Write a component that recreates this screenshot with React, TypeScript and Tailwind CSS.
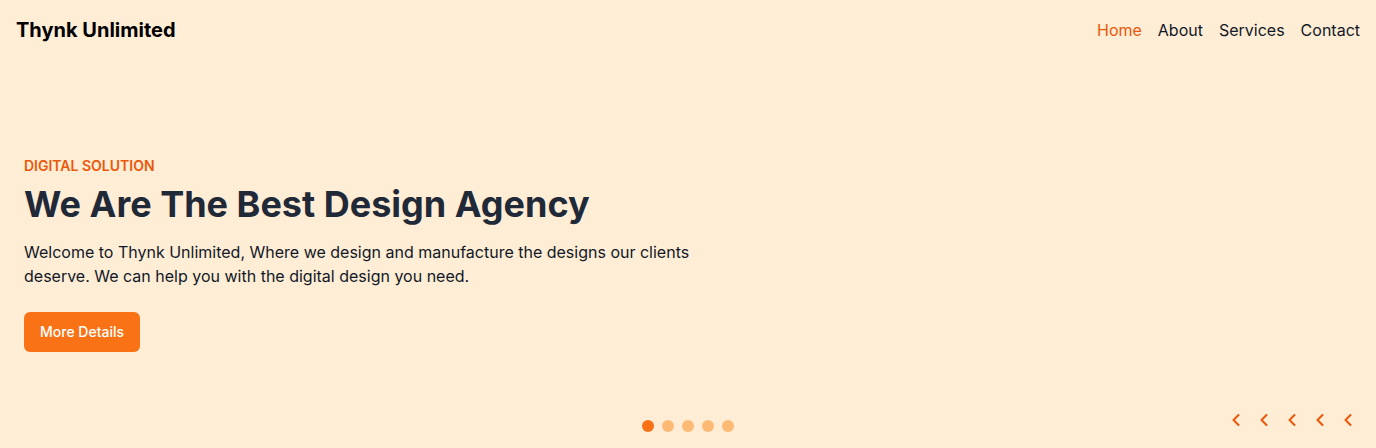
import React from "react";

const Chevron = () => (
  <svg width="20" height="20" viewBox="0 0 24 24" fill="none" stroke="currentColor" strokeWidth="2.5" strokeLinecap="round" strokeLinejoin="round">
    <path d="m15 18-6-6 6-6" />
  </svg>
);

export default function App() {
  return (
    <div className="w-[1376px] h-[448px] bg-[#ffedd5] overflow-hidden" style={{ fontFamily: "Inter, 'Noto Sans', sans-serif" }}>
      <header className="flex items-center justify-between px-4 h-[60px]">
        <div className="text-xl font-bold text-black">Thynk Unlimited</div>
        <nav className="flex items-center gap-4 text-base text-[#111827]">
          <a className="text-[#ea580c]">Home</a>
          <a>About</a>
          <a>Services</a>
          <a>Contact</a>
        </nav>
      </header>
      <section className="relative h-[388px] px-6 pt-24">
        <p className="text-sm font-semibold uppercase text-[#ea580c] mb-2">Digital Solution</p>
        <h1 className="text-4xl font-bold text-[#1f2937] leading-10">We Are The Best Design Agency</h1>
        <p className="mt-4 max-w-2xl text-base leading-6 text-[#111827]">
          Welcome to Thynk Unlimited, Where we design and manufacture the designs our clients deserve. We can help you with the digital design you need.
        </p>
        <button className="mt-6 h-10 px-4 rounded-md bg-[#f97316] text-white text-sm font-medium">More Details</button>
        <div className="absolute bottom-4 left-1/2 -translate-x-1/2 flex gap-2">
          <span className="w-3 h-3 rounded-full bg-[#f97316]" />
          <span className="w-3 h-3 rounded-full bg-[#fdba74]" />
          <span className="w-3 h-3 rounded-full bg-[#fdba74]" />
          <span className="w-3 h-3 rounded-full bg-[#fdba74]" />
          <span className="w-3 h-3 rounded-full bg-[#fdba74]" />
        </div>
        <div className="absolute bottom-[18px] right-[18px] flex gap-2 text-[#ea580c]">
          <Chevron />
          <Chevron />
          <Chevron />
          <Chevron />
          <Chevron />
        </div>
      </section>
    </div>
  );
}
